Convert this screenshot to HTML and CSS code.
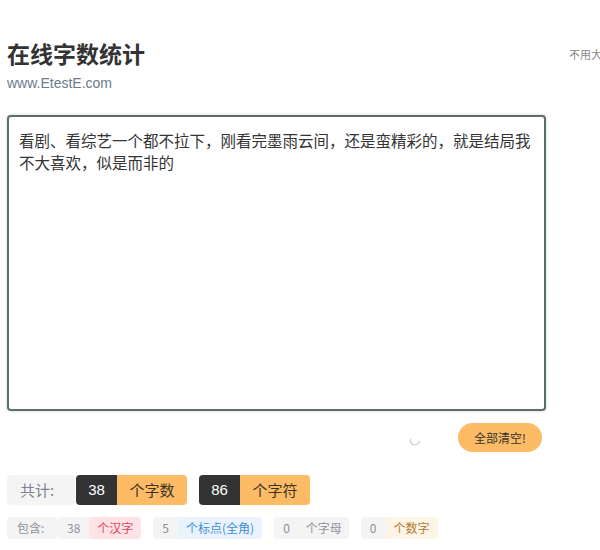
FILE: index.html
```html
<!DOCTYPE html>
<html lang="zh-CN">
<head>
  <meta charset="UTF-8" />
  <meta name="viewport" content="width=device-width, initial-scale=1.0" />
  <title>在线字数统计</title>
  <link rel="stylesheet" href="styles.css">
</head>
<body>
  <div class="page">
    <div class="main">
      <h1 class="title">在线字数统计</h1>
      <div class="site">www.EtestE.com</div>

      <textarea class="editor" spellcheck="false">看剧、看综艺一个都不拉下，刚看完墨雨云间，还是蛮精彩的，就是结局我不大喜欢，似是而非的</textarea>

      <div class="toolbar">
        <svg class="spinner" width="12" height="12" viewBox="0 0 12 12">
          <path d="M1.5 5.5 A4.5 4.5 0 0 0 10.3 7.4" fill="none" stroke="#c9cdd2" stroke-width="1.3" stroke-linecap="round" />
        </svg>
        <button class="clear-btn">全部清空!</button>
      </div>

      <div class="totals">
        <span class="label">共计:</span>
        <span class="pair"><span class="num">38</span><span class="unit">个字数</span></span>
        <span class="pair"><span class="num">86</span><span class="unit">个字符</span></span>
      </div>

      <div class="details">
        <span class="tag">包含:</span>
        <span class="tag-pair"><span class="tag">38</span><span class="tag red">个汉字</span></span>
        <span class="tag-pair"><span class="tag">5</span><span class="tag blue">个标点(全角)</span></span>
        <span class="tag-pair"><span class="tag">0</span><span class="tag gray">个字母</span></span>
        <span class="tag-pair"><span class="tag">0</span><span class="tag orange">个数字</span></span>
      </div>
    </div>

    <div class="aside">不用大写转换工具</div>
  </div>
</body>
</html>
```

FILE: styles.css
```css
html, body {
  margin: 0;
  overflow: hidden;
}
body {
  font-family: "Liberation Sans", "Noto Sans CJK SC", sans-serif;
  color: #333;
  background: #fff;
}
.page {
  display: flex;
  gap: 23px;
  padding: 40px 0 0 7px;
}
.main {
  width: 539px;
  flex-shrink: 0;
}
.title {
  margin: 0;
  font-size: 23px;
  line-height: 30px;
  font-weight: bold;
  color: #333;
}
.site {
  margin-top: 3px;
  font-size: 14px;
  line-height: 20px;
  color: #6c7a8d;
}
.editor {
  display: block;
  box-sizing: border-box;
  width: 539px;
  height: 296px;
  margin-top: 22px;
  padding: 12px 10px;
  border: 2px solid #5d6d6e;
  border-radius: 4px;
  box-shadow: 0 0 3px rgba(93, 109, 110, 0.35);
  font-family: "Noto Sans CJK SC", "Liberation Sans", sans-serif;
  font-size: 15.5px;
  line-height: 22px;
  color: #333;
  resize: none;
  outline: none;
}
.toolbar {
  display: flex;
  justify-content: flex-end;
  align-items: center;
  margin-top: 12px;
  padding-right: 4px;
}
.spinner {
  margin-right: 37px;
  margin-top: 4px;
}
.clear-btn {
  height: 29px;
  padding: 0 16px;
  border: none;
  border-radius: 15px;
  background: #fdbb66;
  color: #333;
  font-family: "Noto Sans CJK SC", sans-serif;
  font-size: 12px;
  cursor: pointer;
}
.totals {
  display: flex;
  gap: 12px;
  margin-top: 23px;
  height: 30px;
  font-size: 15px;
  line-height: 30px;
}
.totals .label {
  width: 68px;
  box-sizing: border-box;
  padding-left: 13px;
  margin-right: -11px;
  background: #f4f4f5;
  color: #7d8290;
  border-radius: 4px;
  font-family: "Noto Sans CJK SC", sans-serif;
}
.pair {
  display: flex;
  border-radius: 4px;
  overflow: hidden;
}
.num {
  width: 41px;
  text-align: center;
  background: #333;
  color: #fff;
}
.unit {
  width: 70px;
  text-align: center;
  background: #fdbb66;
  color: #3e3320;
  font-family: "Noto Sans CJK SC", sans-serif;
}
.details {
  display: flex;
  gap: 12px;
  margin-top: 12px;
  height: 22px;
  font-size: 12px;
  line-height: 22px;
  font-family: "Noto Sans CJK SC", "Liberation Sans", sans-serif;
}
.details > .tag {
  width: 51px;
  margin-right: -12px;
  padding-left: 10px;
  box-sizing: border-box;
  border-radius: 4px;
}
.tag-pair {
  display: flex;
  border-radius: 4px;
  overflow: hidden;
}
.tag {
  background: #f4f4f5;
  color: #8c919b;
  padding: 0 9px;
}
.tag.red {
  background: #fde2e6;
  color: #e2445f;
  padding: 0 8px;
}
.tag.blue {
  background: #e9f3fd;
  color: #3d8fd8;
  padding: 0 8px;
}
.tag.gray {
  background: #f4f4f5;
  color: #8c919b;
  padding: 0 7px;
}
.tag.orange {
  background: #fdf4e7;
  color: #b07a2e;
  padding: 0 8px;
}
.aside {
  margin-top: 6px;
  font-size: 11px;
  color: #888;
  white-space: nowrap;
  font-family: "Noto Sans CJK SC", sans-serif;
}
```
